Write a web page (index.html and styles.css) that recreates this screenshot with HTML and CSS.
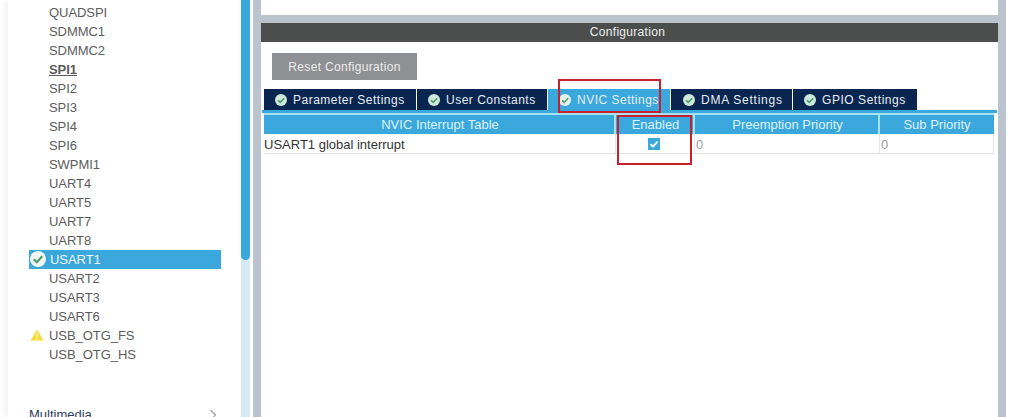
FILE: index.html
```html
<!DOCTYPE html>
<html lang="en">
<head>
<meta charset="utf-8">
<title>NVIC Settings</title>
<link rel="stylesheet" href="styles.css">
</head>
<body>
<div class="page">
  <aside class="side">
    <ul class="list">
      <li class="item">QUADSPI</li>
      <li class="item">SDMMC1</li>
      <li class="item">SDMMC2</li>
      <li class="item bold">SPI1</li>
      <li class="item">SPI2</li>
      <li class="item">SPI3</li>
      <li class="item">SPI4</li>
      <li class="item">SPI6</li>
      <li class="item">SWPMI1</li>
      <li class="item">UART4</li>
      <li class="item">UART5</li>
      <li class="item">UART7</li>
      <li class="item">UART8</li>
      <li class="item selected">
        <svg class="sel-icon" viewBox="0 0 16 16"><circle cx="8" cy="8" r="8" fill="#f2f6f3"/><path d="M3.8 8.2l3 3 5.4-6" fill="none" stroke="#4d9e6c" stroke-width="2.2"/></svg>
        USART1
      </li>
      <li class="item">USART2</li>
      <li class="item">USART3</li>
      <li class="item">USART6</li>
      <li class="item">
        <svg class="warn" viewBox="0 0 14 12"><path d="M7 0.5L13.6 11.5H0.4Z" fill="#f8dc3c"/><rect x="6.3" y="4" width="1.4" height="4" fill="#fff6c0"/><rect x="6.3" y="9" width="1.4" height="1.4" fill="#fff6c0"/></svg>
        USB_OTG_FS
      </li>
      <li class="item">USB_OTG_HS</li>
    </ul>
    <div class="group">
      <span>Multimedia</span>
      <svg class="chev" viewBox="0 0 8 12"><path d="M1.5 1l5 5-5 5" fill="none" stroke="#666" stroke-width="1"/></svg>
    </div>
  </aside>
  <div class="scroll"><div class="thumb"></div></div>
  <main class="main">
    <div class="top"></div>
    <div class="sep"></div>
    <div class="title">Configuration</div>
    <div class="body">
      <button class="reset">Reset Configuration</button>
      <div class="tabs">
        <div class="tab t1"><svg class="tick" viewBox="0 0 12 12"><circle cx="6" cy="6" r="6" fill="#cfe8dc"/><path d="M3 6.2l2.2 2.2 4-4.2" fill="none" stroke="#4d9e6c" stroke-width="1.6"/></svg>Parameter Settings</div>
        <div class="tab t2"><svg class="tick" viewBox="0 0 12 12"><circle cx="6" cy="6" r="6" fill="#cfe8dc"/><path d="M3 6.2l2.2 2.2 4-4.2" fill="none" stroke="#4d9e6c" stroke-width="1.6"/></svg>User Constants</div>
        <div class="tab t3 active"><svg class="tick" viewBox="0 0 12 12"><circle cx="6" cy="6" r="6" fill="#e8f3ee"/><path d="M3 6.2l2.2 2.2 4-4.2" fill="none" stroke="#4d9e6c" stroke-width="1.6"/></svg>NVIC Settings</div>
        <div class="tab t4"><svg class="tick" viewBox="0 0 12 12"><circle cx="6" cy="6" r="6" fill="#cfe8dc"/><path d="M3 6.2l2.2 2.2 4-4.2" fill="none" stroke="#4d9e6c" stroke-width="1.6"/></svg>DMA Settings</div>
        <div class="tab t5"><svg class="tick" viewBox="0 0 12 12"><circle cx="6" cy="6" r="6" fill="#cfe8dc"/><path d="M3 6.2l2.2 2.2 4-4.2" fill="none" stroke="#4d9e6c" stroke-width="1.6"/></svg>GPIO Settings</div>
      </div>
      <div class="rule"></div>
      <div class="table">
        <div class="th">NVIC Interrupt Table</div>
        <div class="th">Enabled</div>
        <div class="th">Preemption Priority</div>
        <div class="th last">Sub Priority</div>
        <div class="td name">USART1 global interrupt</div>
        <div class="td check"><span class="box"><svg viewBox="0 0 12 12"><path d="M2.5 6.2l2.5 2.5 4.5-5" fill="none" stroke="#fff" stroke-width="1.8"/></svg></span></div>
        <div class="td num">0</div>
        <div class="td num">0</div>
      </div>
      <div class="mark mark-tab"></div>
      <div class="mark mark-col"></div>
    </div>
  </main>
  <div class="edge"></div>
</div>
</body>
</html>
```
FILE: styles.css
```css
* { box-sizing: border-box; }
html, body { margin: 0; height: 100%; overflow: hidden; background: #fff; }
body { font-family: "Liberation Sans", Arial, sans-serif; }
.page { display: flex; width: 1012px; height: 417px; overflow: hidden; }

.side { width: 233px; margin-left: 8px; flex: none; background: #fff; box-shadow: -4px 0 4px #f4f4f4; padding-top: 3px; }
.list { list-style: none; margin: 0; padding: 0 20px 0 21px; }
.item { position: relative; height: 19px; line-height: 19px; padding-left: 20px; font-size: 13px; color: #5c5c5c; letter-spacing: -0.05px; }
.bold { font-weight: bold; text-decoration: underline; }
.selected { background: #3aa8dc; color: #f2f8fc; padding-left: 21px; }
.sel-icon { position: absolute; left: 1px; top: 1px; width: 16px; height: 16px; }
.warn { position: absolute; left: 1px; top: 3px; width: 14px; height: 12px; }
.group { display: flex; justify-content: space-between; align-items: center; margin-top: 41px; padding: 0 24px 0 21px; height: 19px; font-size: 13px; color: #2f3b5c; }
.chev { width: 8px; height: 12px; }

.scroll { width: 9px; flex: none; background: #d6e9f5; }
.thumb { width: 100%; height: 260px; background: #3aa8dc; border-radius: 0 0 5px 5px; }

.main { width: 745px; margin-left: 3px; flex: none; border-left: 8px solid #bbc4cd; display: flex; flex-direction: column; }
.top { height: 15px; background: #fff; }
.sep { height: 8px; background: #bbc4cc; }
.title { height: 19px; line-height: 19px; background: #4c4e4e; color: #eee; text-align: center; font-size: 12px; letter-spacing: 0.3px; padding-right: 4px; }
.body { position: relative; flex: 1; background: #fff; padding: 11px 0 0 0; }

.reset { display: block; width: 145px; height: 27px; margin: 0 0 9px 11px; border: 0; padding: 0; background: #8e9093; color: #ececec; font: 12px "Liberation Sans", Arial, sans-serif; letter-spacing: 0.33px; }

.tabs { display: flex; gap: 1px; margin-left: 3px; height: 21px; }
.tab { display: flex; align-items: center; height: 21px; background: #0a2550; color: #e6eef4; font-size: 12px; letter-spacing: 0.5px; padding-left: 11px; white-space: nowrap; }
.t1 { width: 152px; }
.t2 { width: 130px; }
.t3 { width: 122px; }
.t4 { width: 121px; padding-left: 12px; letter-spacing: 0.75px; }
.t5 { width: 124px; letter-spacing: 0.55px; }
.active { background: #3aa8dc; }
.tick { width: 12px; height: 12px; margin-right: 6px; flex: none; }
.rule { height: 3px; margin: 0 1px 0 1px; background: #3aa8dc; }
.rule + .table { border-top: 2px solid #a5e2f2; }

.table { display: grid; grid-template-columns: 352px 79px 185px 114px; grid-template-rows: 19px 20px; margin: 0 3px 0 3px; width: 730px; }
.th { height: 19px; line-height: 20px; padding-left: 2px; background: #3aa8dc; color: #dff2fb; font-size: 13px; text-align: center; border-right: 2px solid #a5e2f2; }
.last { border-right: 0; padding-left: 0; }
.td { height: 20px; line-height: 21px; font-size: 13px; color: #333; border-bottom: 1px solid #e2e2e2; border-right: 1px solid #e6e6e6; }
.num { color: #a0a0a0; padding-left: 1px; }
.check { display: flex; justify-content: center; align-items: center; }
.box { display: block; width: 12px; height: 12px; background: #3aa8dc; margin-right: 2px; }
.box svg { display: block; width: 12px; height: 12px; }

.mark { position: absolute; border: 2px solid #c8202f; }
.mark-tab { left: 297px; top: 37px; width: 103px; height: 34px; }
.mark-col { left: 356px; top: 73px; width: 75px; height: 50px; }

.edge { width: 8px; flex: none; background: #bbc4cd; }
```
